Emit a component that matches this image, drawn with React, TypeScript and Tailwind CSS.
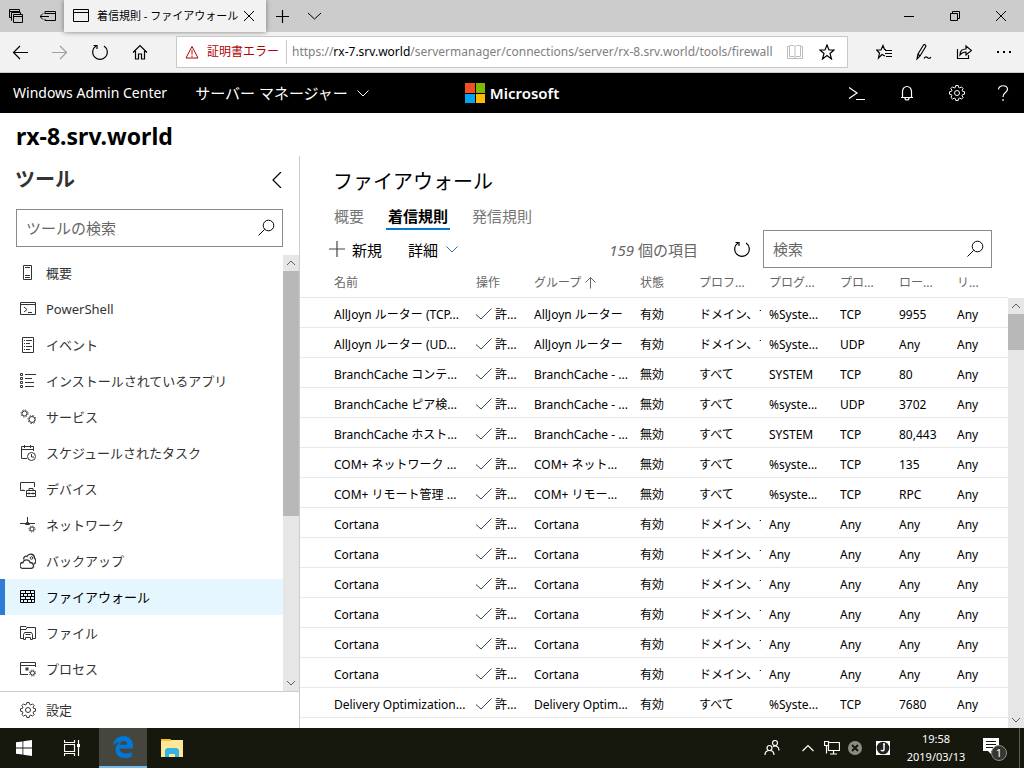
import { ReactNode, SVGProps, useState } from "react";

type IconProps = SVGProps<SVGSVGElement> & { size?: number; children?: ReactNode };

function Icon({ size = 16, children, ...rest }: IconProps) {
	return (
		<svg
			width={size}
			height={size}
			viewBox={`0 0 ${size} ${size}`}
			fill="none"
			stroke="currentColor"
			strokeWidth={1}
			aria-hidden="true"
			className="shrink-0"
			{...rest}
		>
			{children}
		</svg>
	);
}

const GEAR =
	"M6.8 .5h2.4l.4 1.9 1.2.5 1.7-1 1.6 1.6-1 1.7.5 1.2 1.9.4v2.4l-1.9.4-.5 1.2 1 1.7-1.6 1.6-1.7-1-1.2.5-.4 1.9H6.8l-.4-1.9-1.2-.5-1.7 1-1.6-1.6 1-1.7-.5-1.2L.5 9.200V6.800l1.900-.4.5-1.200-1-1.700L3.500 1.900l1.700 1 1.200-.5z";

function GearIcon() {
	return (
		<Icon>
			<path d={GEAR} />
			<circle cx="8" cy="8" r="2.500" />
		</Icon>
	);
}

function RefreshIcon() {
	return (
		<Icon>
			<path d="M4 2A7.300 7.300 0 1 0 12 2M1.500 1.500H5V5" strokeWidth={1.200} />
		</Icon>
	);
}

function SearchIcon() {
	return (
		<Icon size={18}>
			<circle cx="11.500" cy="6.500" r="5.300" />
			<path d="M7.700 10.300L1.500 16.500" />
		</Icon>
	);
}

function ChevronDown() {
	return (
		<Icon size={14}>
			<path d="M1.500 4.500L7 10l5.500-5.500" />
		</Icon>
	);
}

const cogs = (
	<>
		<circle cx="4.500" cy="4.500" r="2.500" />
		<circle cx="4.500" cy="4.500" r="3.500" strokeDasharray="1.400 1.350" />
		<circle cx="12" cy="10.500" r="3" />
		<circle cx="12" cy="10.500" r="4" strokeDasharray="1.500 1.640" />
	</>
);

const tools: { label: string; icon: ReactNode }[] = [
	{ label: "概要", icon: <path d="M3.500.5h8v14h-8zM5 2.500h5M5 10.500h5M5 12.500h5" /> },
	{ label: "PowerShell", icon: <path d="M.5 1.500h15v12H.5zM.5 3.500h15M4 6l3 2.500L4 11M8 11.500h4" /> },
	{
		label: "イベント",
		icon: <path d="M2.500.5h11v15h-11zM4 3.500h1M4 6.500h1M4 9.500h1M4 12.500h1M6 3.500h6M6 6.500h4M6 9.500h6M6 12.500h4" />,
	},
	{
		label: "インストールされているアプリ",
		icon: <path d="M.5.5h2v2h-2zM.5 4.500h2v2h-2zM.5 8.500h2v2h-2zM.5 12.500h2v2h-2zM5 1.500h11M5 5.500h7M5 9.500h9M5 13.500h9" />,
	},
	{ label: "サービス", icon: cogs },
	{
		label: "スケジュールされたタスク",
		icon: (
			<>
				<path d="M7 13.500H1.500v-12h12V6M1.500 4.500h12M4.500 0v3M10.500 0v3M11.500 9v3H14" />
				<circle cx="11.500" cy="11.500" r="4" />
			</>
		),
	},
	{
		label: "デバイス",
		icon: <path d="M5 9.500H.5v-8h14V6M3 9.500v-1M6.500 9.500h9v6h-9zM6.500 12.500h9M9 9.500v-2h4v2M9 11.500v2M13 11.500v2" />,
	},
	{
		label: "ネットワーク",
		icon: (
			<>
				<path d="M7.500 0v5M0 6.500h15M5.500 7.500l1-2h2l1 2z" />
				<circle cx="12" cy="12" r="2" />
				<circle cx="12" cy="12" r="3" strokeDasharray="1.200 1.150" />
			</>
		),
	},
	{
		label: "バックアップ",
		icon: (
			<>
				<path d="M3 15.500a3 3 0 0 1 0-6C4 6 9 6 10 9.500c4 0 5 5.500 1 6z" strokeWidth={1.300} />
				<path d="M4 6.500C3 4 5.500 2.500 7 3.500 9-.5 14.500 1 14.500 5c2 2 1.500 5-.5 6" strokeWidth={1.300} />
				<circle cx="11.500" cy="5" r="1.300" />
			</>
		),
	},
	{
		label: "ファイアウォール",
		icon: (
			<path d="M.5 1.500h14v12H.5zM.5 4.500h14M.5 7.500h14M.5 10.500h14M5.500 1.500v3M10.500 1.500v3M3.500 4.500v3M7.500 4.500v3M11.500 4.500v3M5.500 7.500v3M10.500 7.500v3M3.500 10.500v3M7.500 10.500v3M11.500 10.500v3" />
		),
	},
	{
		label: "ファイル",
		icon: <path d="M4 13.500H.5v-12H6l1 1h8.500v11H12M.5 4.500H6l1-2M3.500 14.500v-5l1-2h7l1 2v5H10.500v-2h-5v2zM5.500 9.500h5" />,
	},
	{
		label: "プロセス",
		icon: (
			<>
				<path d="M8 13.500H.5v-12h15V6M.5 4.500h15M7 6v4M5.200 7l3.600 2M8.800 7L5.200 9" />
				<circle cx="12.500" cy="12" r="2" />
				<circle cx="12.500" cy="12" r="3" strokeDasharray="1.200 1.150" />
			</>
		),
	},
];

const columns = [
	{ label: "名前", width: "w-[176px]" },
	{ label: "操作", width: "w-[58px]" },
	{ label: "グループ", width: "w-[106px]" },
	{ label: "状態", width: "w-[59px]" },
	{ label: "プロフ...", width: "w-[70px]" },
	{ label: "プログ...", width: "w-[71px]" },
	{ label: "プロ...", width: "w-[59px]" },
	{ label: "ロー...", width: "w-[58px]" },
	{ label: "リ...", width: "w-[51px]" },
];

const DOMAIN = "ドメイン、プ";
const cortana = ["Cortana", "Cortana", "有効", DOMAIN, "Any", "Any", "Any", "Any"];

const rules: string[][] = [
	["AllJoyn ルーター (TCP...", "AllJoyn ルーター", "有効", DOMAIN, "%Syste...", "TCP", "9955", "Any"],
	["AllJoyn ルーター (UD...", "AllJoyn ルーター", "有効", DOMAIN, "%Syste...", "UDP", "Any", "Any"],
	["BranchCache コンテ...", "BranchCache - ...", "無効", "すべて", "SYSTEM", "TCP", "80", "Any"],
	["BranchCache ピア検...", "BranchCache - ...", "無効", "すべて", "%syste...", "UDP", "3702", "Any"],
	["BranchCache ホスト...", "BranchCache - ...", "無効", "すべて", "SYSTEM", "TCP", "80,443", "Any"],
	["COM+ ネットワーク ...", "COM+ ネット...", "無効", "すべて", "%syste...", "TCP", "135", "Any"],
	["COM+ リモート管理 ...", "COM+ リモー...", "無効", "すべて", "%syste...", "TCP", "RPC", "Any"],
	cortana,
	cortana,
	cortana,
	cortana,
	cortana,
	cortana,
	["Delivery Optimization...", "Delivery Optim...", "有効", "すべて", "%Syste...", "TCP", "7680", "Any"],
];

function ScrollBar({ thumb }: { thumb: string }) {
	return (
		<div className="flex w-4 shrink-0 flex-col items-center bg-[#e6e6e6] text-[#606060]">
			<Icon>
				<path d="M4 10l4-4 4 4" />
			</Icon>
			<div className={`w-full bg-[#b8b8b8] ${thumb}`} />
			<div className="flex-1" />
			<Icon>
				<path d="M4 6l4 4 4-4" />
			</Icon>
		</div>
	);
}

function BrowserChrome() {
	return (
		<div className="shrink-0">
			<div className="flex h-8 items-center bg-[#cccccc]">
				<div className="flex w-16 items-center gap-4 pl-2">
					<button aria-label="Set aside tabs">
						<Icon>
							<path d="M1.500 9.500V1.500h10v3M1.500 3.500h10M4 12.500H3.500V4.500h9v2M5.500 6.500h9v8h-9zM5.500 8.500h9M1.500 9.500h2" />
						</Icon>
					</button>
					<button aria-label="Saved tabs">
						<Icon>
							<path d="M5 6V3.500h10.500v9H5V11M5 5.500h10.500M0 8.500h9M3 5.500l-3 3 3 3" />
						</Icon>
					</button>
				</div>
				<div className="flex h-full w-[202px] items-center bg-[#f2f2f2] pl-[9px] shadow-[0_0_5px_#777]">
					<Icon>
						<path d="M.5 1.500h15v12H.5zM.5 4.500h15" />
					</Icon>
					<span className="ml-2 w-[144px] overflow-hidden text-[11px] leading-8 whitespace-nowrap">
						着信規則 - ファイアウォール
					</span>
					<button aria-label="Close tab" className="ml-[2px]">
						<Icon size={12}>
							<path d="M1 1l10 10M11 1L1 11" />
						</Icon>
					</button>
				</div>
				<button aria-label="New tab" className="ml-2">
					<Icon>
						<path d="M8.500 2v13M2 8.500h13" strokeWidth={1.200} />
					</Icon>
				</button>
				<button aria-label="Tab previews" className="ml-4">
					<Icon>
						<path d="M2 5l6.500 6L15 5" />
					</Icon>
				</button>
				<div className="ml-auto flex items-center gap-[34px] pr-[17px]">
					<button aria-label="Minimize">
						<Icon size={12}>
							<path d="M1 6.500h10" />
						</Icon>
					</button>
					<button aria-label="Restore">
						<Icon size={12}>
							<path d="M1.500 3.500h7v7h-7zM3.500 3.500v-2h7v7h-2" />
						</Icon>
					</button>
					<button aria-label="Close">
						<Icon size={12}>
							<path d="M1 1l10 10M11 1L1 11" />
						</Icon>
					</button>
				</div>
			</div>
			<div className="flex h-[41px] items-center border-b border-[#cccccc] bg-[#f2f2f2] pl-3">
				<div className="flex w-[164px] items-center gap-6">
					<button aria-label="Back">
						<Icon>
							<path d="M16 8.500H1.500M8 2L1.500 8.500 8 15" strokeWidth={1.200} />
						</Icon>
					</button>
					<button aria-label="Forward" className="text-[#a0a0a0]">
						<Icon>
							<path d="M0 8.500h14.500M8 2l6.500 6.500L8 15" strokeWidth={1.200} />
						</Icon>
					</button>
					<button aria-label="Refresh">
						<RefreshIcon />
					</button>
					<button aria-label="Home">
						<Icon>
							<path d="M1 8.500l7-7 7 7M3.500 7v8h3v-5h3v5h3V7" strokeWidth={1.200} />
						</Icon>
					</button>
				</div>
				<div className="flex h-8 min-w-0 flex-1 items-center border border-[#c8c8c8] bg-white pl-2">
					<span className="flex h-6 w-[102px] shrink-0 items-center gap-2 border-r border-[#c8c8c8] text-xs whitespace-nowrap text-[#b30000]">
						<Icon size={14}>
							<path d="M7 1.500L13 13H1zM7 5v4.500M7 10.500v1.500" />
						</Icon>
						証明書エラー
					</span>
					<span className="ml-[5px] min-w-0 flex-1 overflow-hidden text-xs whitespace-nowrap text-[#808080]">
						https://<span className="text-black">rx-7.srv.world</span>
						/servermanager/connections/server/rx-8.srv.world/tools/firewall
					</span>
					<button aria-label="Reading view" className="ml-2 text-[#bdbdbd]">
						<Icon>
							<path d="M.5 2.500h2v-1h4l1.500 1 1.500-1h4v1h2v12H.5zM2.500 2.500v10H7l1 1 1-1h4.500v-10M8 2.500v11" />
						</Icon>
					</button>
					<button aria-label="Add to favorites" className="mr-3 ml-4">
						<Icon>
							<path d="M8 1l2 5h5l-4 3.500 1.500 5.500L8 11.500 3.500 15 5 9.500 1 6h5z" strokeWidth={1.200} />
						</Icon>
					</button>
				</div>
				<div className="flex items-center gap-6 pr-3 pl-7">
					<button aria-label="Favorites">
						<Icon>
							<path d="M9 12L6 10.500 2.500 14l1-5L.5 6h4.500l2-4.500 1.500 4H10M9 6.500h7M9 9.500h7M10 12.500h6" strokeWidth={1.200} />
						</Icon>
					</button>
					<button aria-label="Add notes">
						<Icon>
							<path d="M1 15l1-5L7.500 1c1-1 3 0 2 2L4 12zM2 10l2 2M8 14.500c2-3 3-1 4-.5s2 .5 3-1" strokeWidth={1.200} />
						</Icon>
					</button>
					<button aria-label="Share">
						<Icon>
							<path d="M1.500 5v9.500h11V11M4 11c0-4 2-6 6-6V2l5.500 4.500L10 11V8c-3 0-4.500 1-6 3z" strokeWidth={1.200} />
						</Icon>
					</button>
					<button aria-label="Settings and more">
						<Icon fill="currentColor" stroke="none">
							<path d="M1 7h2v2H1zM7 7h2v2H7zM13 7h2v2h-2z" />
						</Icon>
					</button>
				</div>
			</div>
		</div>
	);
}

function AppHeader() {
	return (
		<header className="grid h-10 shrink-0 grid-cols-[1fr_auto_1fr] items-center bg-black text-white">
			<div className="flex items-center pl-[13px] whitespace-nowrap">
				<a href="#home" className="text-sm">
					Windows Admin Center
				</a>
				<button className="ml-7 flex items-center gap-2 text-[15px]">
					サーバー マネージャー
					<ChevronDown />
				</button>
			</div>
			<div className="flex items-center gap-[5px]">
				<svg width="20" height="20" viewBox="0 0 20 20" aria-hidden="true">
					<path d="M0 0h10v10H0z" fill="#f25022" />
					<path d="M11 0h9v10h-9z" fill="#7fba00" />
					<path d="M0 11h10v9H0z" fill="#00a4ef" />
					<path d="M11 11h9v9h-9z" fill="#ffb900" />
				</svg>
				<span className="text-[15px] font-semibold">Microsoft</span>
			</div>
			<div className="flex items-center justify-end gap-[34px] pr-[13px]">
				<button aria-label="PowerShell">
					<Icon>
						<path d="M0 2.500l8 5.500-8 5.500M7 14.500h9" strokeWidth={1.200} />
					</Icon>
				</button>
				<button aria-label="Notifications">
					<Icon>
						<path d="M2 12.500h12M3.500 12V6.500a4.500 5 0 0 1 9 0V12M6 13a2 2 0 0 0 4 0" strokeWidth={1.200} />
					</Icon>
				</button>
				<button aria-label="Settings">
					<GearIcon />
				</button>
				<button aria-label="Help" className="-ml-1">
					<Icon>
						<path d="M3.500 4.500c0-5 9-5 9 0C12.500 7.500 8 7 8 12M8 14v2" strokeWidth={1.200} />
					</Icon>
				</button>
			</div>
		</header>
	);
}

function Sidebar() {
	const [selected, setSelected] = useState("ファイアウォール");
	return (
		<aside className="flex w-[300px] shrink-0 flex-col border-r border-[#cccccc] text-[#333333]">
			<div className="flex h-[53px] shrink-0 items-start justify-between pt-2 pr-[14px] pl-[15px]">
				<h2 className="text-xl leading-8 font-bold">ツール</h2>
				<button aria-label="Collapse" className="mt-2 text-black">
					<Icon>
						<path d="M12 0L4 8l8 8" strokeWidth={1.200} />
					</Icon>
				</button>
			</div>
			<div className="mr-4 ml-4 flex h-[38px] shrink-0 items-center border border-[#8a8a8a] pr-[7px] pl-[9px] text-black">
				<input
					type="search"
					aria-label="ツールの検索"
					placeholder="ツールの検索"
					className="min-w-0 flex-1 text-[15px] outline-none placeholder:text-[#666666]"
				/>
				<SearchIcon />
			</div>
			<div className="mt-2 flex min-h-0 flex-1">
				<ul className="min-w-0 flex-1 overflow-hidden">
					{tools.map((tool) => (
						<li key={tool.label}>
							<button
								onClick={() => setSelected(tool.label)}
								className={`flex h-9 w-full items-center gap-[10px] border-l-[5px] pl-[15px] text-[13px] ${
									selected === tool.label ? "border-[#2f7cd6] bg-[#e5f6fe] text-black" : "border-transparent"
								}`}
							>
								<Icon>{tool.icon}</Icon>
								<span className="pt-[2px]">{tool.label}</span>
							</button>
						</li>
					))}
				</ul>
				<ScrollBar thumb="h-[245px]" />
			</div>
			<button className="flex h-[37px] shrink-0 items-center gap-[10px] border-t border-[#cccccc] pl-5 text-[13px]">
				<GearIcon />
				<span className="pt-[2px]">設定</span>
			</button>
		</aside>
	);
}

function RulesTable() {
	return (
		<div className="flex min-h-0 flex-1">
			<div className="min-w-0 flex-1 overflow-hidden">
				<table className="w-full table-fixed text-left text-xs">
					<colgroup>
						{columns.map((c) => (
							<col key={c.label} className={c.width} />
						))}
					</colgroup>
					<thead>
						<tr className="h-[29px] border-b border-[#e5e5e5] text-[#666666]">
							{columns.map((c) => (
								<th key={c.label} className="pt-[2px] font-normal whitespace-nowrap first:pl-[34px]">
									{c.label === "グループ" ? (
										<button className="flex items-center gap-[3px]">
											{c.label}
											<Icon size={12}>
												<path d="M6.500 11.500V.5M1.500 5.500l5-5 5 5" />
											</Icon>
										</button>
									) : (
										c.label
									)}
								</th>
							))}
						</tr>
					</thead>
					<tbody>
						{rules.map(([name, ...rest], i) => (
							<tr key={i} className="h-[30px] border-b border-[#e9e9e9]">
								<td className="pt-[5px] pl-[34px] whitespace-nowrap">{name}</td>
								<td className="pt-[5px]">
									<span className="flex items-center gap-[3px] whitespace-nowrap">
										<Icon stroke="#444444">
											<path d="M0 7.500l5 4.500L15.500 1.500" />
										</Icon>
										許...
									</span>
								</td>
								{rest.map((cell, j) => (
									<td key={j} className="pt-[5px]">
										<div className="mr-2 overflow-hidden whitespace-nowrap">{cell}</div>
									</td>
								))}
							</tr>
						))}
					</tbody>
				</table>
			</div>
			<div className="mt-[30px] flex">
				<ScrollBar thumb="h-9" />
			</div>
		</div>
	);
}

function Firewall() {
	return (
		<main className="flex min-w-0 flex-1 flex-col">
			<h2 className="pt-[10px] pl-[33px] text-xl leading-8">ファイアウォール</h2>
			<nav className="mt-[6px] flex gap-[22px] pl-[34px] text-[15px] leading-6 text-[#767676]">
				<a href="#overview">概要</a>
				<a href="#inbound" className="border-b-2 border-[#0078d7] px-[2px] font-bold text-black">
					着信規則
				</a>
				<a href="#outbound">発信規則</a>
			</nav>
			<div className="flex h-[38px] shrink-0 items-center pr-8 pl-[29px] text-[15px]">
				<button className="flex items-center gap-[7px]">
					<Icon stroke="#444444">
						<path d="M8 0v16M0 8h16" strokeWidth={1.200} />
					</Icon>
					<span className="pt-[2px]">新規</span>
				</button>
				<button className="ml-[26px] flex items-center gap-[7px]">
					<span className="pt-[2px]">詳細</span>
					<span className="text-[#2f6f9f]">
						<ChevronDown />
					</span>
				</button>
				<span className="mr-9 ml-auto pt-[2px] text-[#666666]">
					<i>159</i> 個の項目
				</span>
				<button aria-label="更新" className="mr-[13px]">
					<RefreshIcon />
				</button>
				<div className="flex h-[38px] w-[229px] items-center border border-[#8a8a8a] pr-[7px] pl-[9px]">
					<input
						type="search"
						aria-label="検索"
						placeholder="検索"
						className="min-w-0 flex-1 outline-none placeholder:text-[#666666]"
					/>
					<SearchIcon />
				</div>
			</div>
			<RulesTable />
		</main>
	);
}

function Taskbar() {
	return (
		<footer className="flex h-10 shrink-0 items-center bg-[#16180d] text-white">
			<button aria-label="Start" className="flex w-12 justify-center">
				<Icon fill="currentColor" stroke="none">
					<path d="M0 2.300l6.500-.9v6.200H0zM7.300 1.200L16 0v7.600H7.300zM0 8.400h6.500v6.200L0 13.700zM7.300 8.400H16V16l-8.700-1.200z" />
				</Icon>
			</button>
			<button aria-label="Task view" className="mr-[3px] flex w-12 justify-center">
				<Icon>
					<path d="M.5 0v2.500h10V0M.5 16v-2.500h10V16M.5 4.500h10v7H.5zM14.500 0v16" strokeWidth={1.200} />
					<path d="M13 4h3v3h-3z" fill="currentColor" stroke="none" />
				</Icon>
			</button>
			<button aria-label="Edge" className="flex h-full w-12 items-center justify-center border-b-2 border-[#76b9ed] bg-[#45473e]">
				<svg width="22" height="22" viewBox="0 0 22 22" fill="#0078d7" aria-hidden="true">
					<path d="M1 9.500C2 3.500 6 0 11.500 0 17.500 0 21 4.500 21 10v2.500H7.500c.2 3.500 3 5 6.200 5 2.300 0 4.300-.6 6-1.600v4.600c-2 1-4.300 1.500-6.700 1.500C7 22 3.500 18.500 3.500 13.500c0-3.500 2-6.300 5-7.500C5.500 6 2.800 7.500 1 9.500zM7.600 8.800h7.600c0-2.300-1.200-3.700-3.500-3.700-2.200 0-3.700 1.500-4.100 3.700z" />
				</svg>
			</button>
			<button aria-label="Explorer" className="flex w-[50px] justify-center">
				<svg width="22" height="20" viewBox="0 0 22 20" aria-hidden="true">
					<path d="M0 1h9l1 1h12v17H0z" fill="#ffe79a" />
					<path d="M0 1h9l1 1v1H0z" fill="#f8c31b" />
					<path d="M4 19v-7l2-2h10l2 2v7h-4v-3H8v3z" fill="#33b2e3" />
				</svg>
			</button>
			<div className="ml-auto flex h-full items-center">
				<button aria-label="People">
					<Icon>
						<circle cx="5.500" cy="8" r="2.500" strokeWidth={1.200} />
						<path d="M1 15c0-6 9-6 9 0" strokeWidth={1.200} />
						<circle cx="11" cy="3" r="2.500" strokeWidth={1.200} />
						<path d="M9 6.500c3-1.500 6 0 6 4" strokeWidth={1.200} />
					</Icon>
				</button>
				<button aria-label="Hidden icons" className="ml-5">
					<Icon>
						<path d="M2.500 11L8 5.500l5.500 5.500" strokeWidth={1.200} />
					</Icon>
				</button>
				<button aria-label="Network" className="ml-2">
					<Icon>
						<path d="M5 2.500h10.500v8H4.500V6M.5 1.500h4v4h-4zM2.500 5.500V13.500M9.500 10.500v3M6 14h7" strokeWidth={1.200} />
					</Icon>
				</button>
				<button aria-label="Volume" className="ml-[7px]">
					<Icon stroke="#16180d">
						<circle cx="8" cy="8" r="7" fill="#8c8c86" stroke="none" />
						<path d="M5 5l6 6M11 5l-6 6" strokeWidth={2} />
					</Icon>
				</button>
				<button aria-label="IME" className="ml-3">
					<Icon stroke="none">
						<path d="M1 1h14v14H1z" fill="#ffffff" />
						<circle cx="8" cy="8" r="6.300" fill="#222222" />
						<path d="M9 4v5.500c0 1.500-2 1.800-3 .5M8 4h2" stroke="#ffffff" strokeWidth={1.500} />
					</Icon>
				</button>
				<div className="w-[90px] text-center text-[11px] leading-[18px]">
					<div>19:58</div>
					<div>2019/03/13</div>
				</div>
				<button aria-label="Notifications" className="ml-px flex">
					<svg width="26" height="26" viewBox="0 0 26 26" aria-hidden="true">
						<path d="M1 3h16v13H9v3l-3-3H1z" fill="#ffffff" />
						<path d="M4 6.500h10M4 9.500h10M4 12.500h7" stroke="#16180d" />
						<circle cx="17" cy="18" r="7.500" fill="#35362f" stroke="#8c8c86" />
						<text x="17" y="22" textAnchor="middle" fill="#ffffff" className="text-[11px]">
							1
						</text>
					</svg>
				</button>
				<div className="ml-[11px] h-full w-[5px] border-l border-[#5c5d55]" />
			</div>
		</footer>
	);
}

export default function App() {
	return (
		<div className="flex h-screen flex-col overflow-hidden bg-white font-['Noto_Sans','Noto_Sans_CJK_JP',sans-serif] text-black">
			<BrowserChrome />
			<AppHeader />
			<h1 className="h-[43px] shrink-0 pl-4 text-[23px] leading-[46px] font-bold">rx-8.srv.world</h1>
			<div className="flex min-h-0 flex-1">
				<Sidebar />
				<Firewall />
			</div>
			<Taskbar />
		</div>
	);
}
